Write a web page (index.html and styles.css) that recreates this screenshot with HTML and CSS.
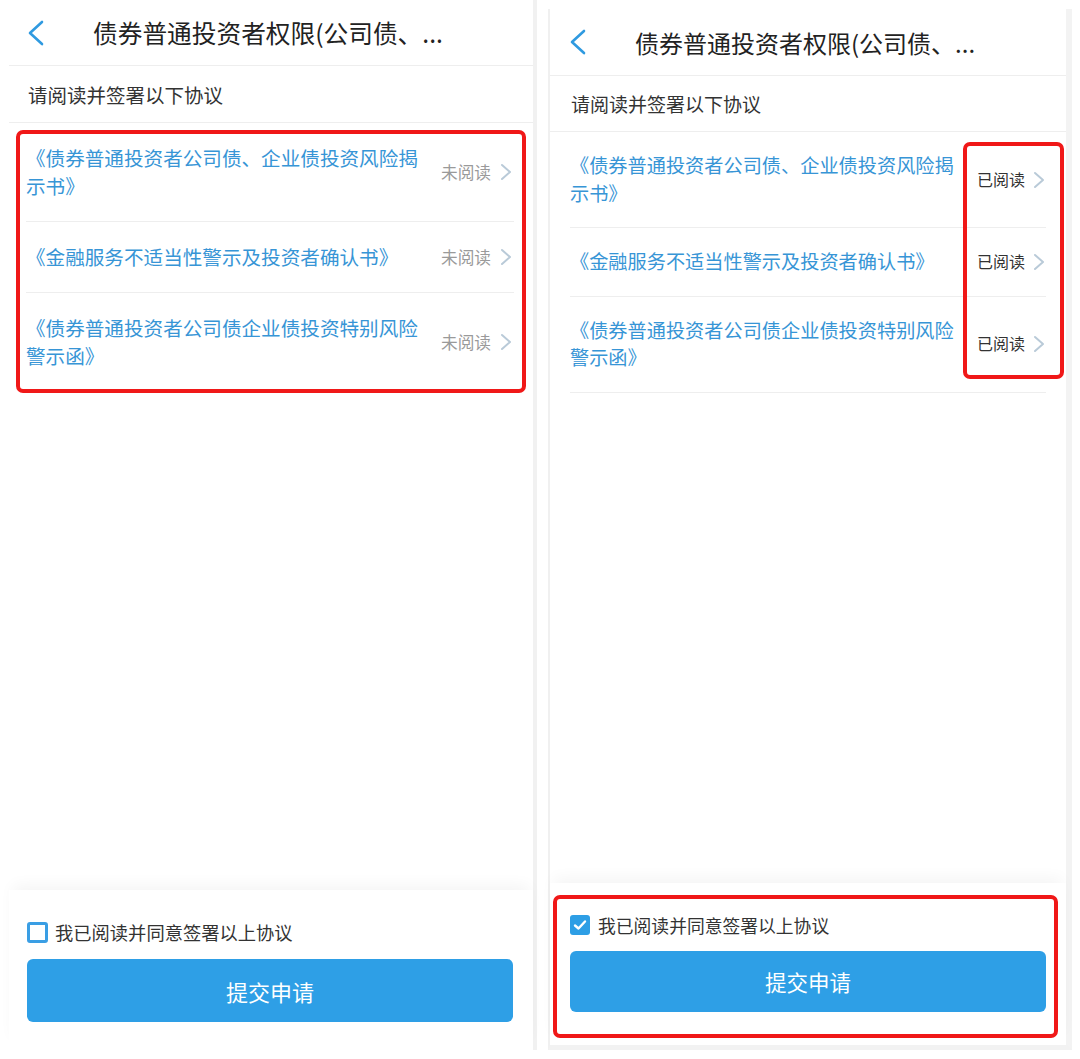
FILE: index.html
```html
<!DOCTYPE html>
<html lang="zh-CN">
<head>
<meta charset="utf-8">
<link rel="stylesheet" href="styles.css">
</head>
<body>
<div class="screens">
  <section class="phone phone-left">
    <header class="nav">
      <svg class="back" width="16" height="26" viewBox="0 0 16 26"><polyline points="14,2 2,13 14,24" fill="none" stroke="#2f9ae0" stroke-width="2.6" stroke-linecap="round" stroke-linejoin="round"/></svg>
      <h1 class="title">债券普通投资者权限(公司债、...</h1>
    </header>
    <div class="sub">请阅读并签署以下协议</div>
    <main class="content">
      <ul class="docs boxed">
        <li class="doc two">
          <span class="doc-name">《债券普通投资者公司债、企业债投资风险揭示书》</span>
          <span class="status unread">未阅读</span>
          <svg class="arrow" width="12" height="18" viewBox="0 0 12 18"><polyline points="2,2 10,9 2,16" fill="none" stroke="#b9cad8" stroke-width="2" stroke-linecap="round" stroke-linejoin="round"/></svg>
        </li>
        <li class="doc">
          <span class="doc-name">《金融服务不适当性警示及投资者确认书》</span>
          <span class="status unread">未阅读</span>
          <svg class="arrow" width="12" height="18" viewBox="0 0 12 18"><polyline points="2,2 10,9 2,16" fill="none" stroke="#b9cad8" stroke-width="2" stroke-linecap="round" stroke-linejoin="round"/></svg>
        </li>
        <li class="doc two">
          <span class="doc-name">《债券普通投资者公司债企业债投资特别风险警示函》</span>
          <span class="status unread">未阅读</span>
          <svg class="arrow" width="12" height="18" viewBox="0 0 12 18"><polyline points="2,2 10,9 2,16" fill="none" stroke="#b9cad8" stroke-width="2" stroke-linecap="round" stroke-linejoin="round"/></svg>
        </li>
      </ul>
    </main>
    <footer class="bottom">
      <label class="agree">
        <span class="check empty"></span>
        <span>我已阅读并同意签署以上协议</span>
      </label>
      <button class="submit">提交申请</button>
    </footer>
  </section>

  <section class="phone phone-right">
    <header class="nav">
      <svg class="back" width="16" height="26" viewBox="0 0 16 26"><polyline points="14,2 2,13 14,24" fill="none" stroke="#2f9ae0" stroke-width="2.6" stroke-linecap="round" stroke-linejoin="round"/></svg>
      <h1 class="title">债券普通投资者权限(公司债、...</h1>
    </header>
    <div class="sub">请阅读并签署以下协议</div>
    <main class="content">
      <ul class="docs status-boxed">
        <li class="doc two">
          <span class="doc-name">《债券普通投资者公司债、企业债投资风险揭示书》</span>
          <span class="status read">已阅读</span>
          <svg class="arrow" width="12" height="18" viewBox="0 0 12 18"><polyline points="2,2 10,9 2,16" fill="none" stroke="#b9cad8" stroke-width="2" stroke-linecap="round" stroke-linejoin="round"/></svg>
        </li>
        <li class="doc">
          <span class="doc-name">《金融服务不适当性警示及投资者确认书》</span>
          <span class="status read">已阅读</span>
          <svg class="arrow" width="12" height="18" viewBox="0 0 12 18"><polyline points="2,2 10,9 2,16" fill="none" stroke="#b9cad8" stroke-width="2" stroke-linecap="round" stroke-linejoin="round"/></svg>
        </li>
        <li class="doc two">
          <span class="doc-name">《债券普通投资者公司债企业债投资特别风险警示函》</span>
          <span class="status read">已阅读</span>
          <svg class="arrow" width="12" height="18" viewBox="0 0 12 18"><polyline points="2,2 10,9 2,16" fill="none" stroke="#b9cad8" stroke-width="2" stroke-linecap="round" stroke-linejoin="round"/></svg>
        </li>
      </ul>
    </main>
    <footer class="bottom boxed-bottom">
      <label class="agree">
        <span class="check checked"><svg width="20" height="20" viewBox="0 0 20 20"><polyline points="5,10.5 8.5,13.5 15,6.5" fill="none" stroke="#fff" stroke-width="2.4" stroke-linecap="round" stroke-linejoin="round"/></svg></span>
        <span>我已阅读并同意签署以上协议</span>
      </label>
      <button class="submit">提交申请</button>
    </footer>
  </section>
</div>
</body>
</html>
```

FILE: styles.css
```css
* { box-sizing: border-box; }
html, body { margin: 0; padding: 0; background: #fff; }
body {
  width: 1080px;
  height: 1059px;
  overflow: hidden;
  font-family: "Noto Sans CJK SC", "Noto Sans", sans-serif;
  color: #333;
}
ul { list-style: none; margin: 0; padding: 0; }
h1 { margin: 0; font-weight: normal; }
button { font-family: inherit; border: 0; cursor: pointer; }

.screens {
  display: flex;
  align-items: flex-start;
  padding-left: 9px;
  gap: 11px;
}

.phone {
  display: flex;
  flex-direction: column;
  background: #fff;
}
.phone-left {
  width: 528px;
  height: 1050px;
  border-right: 4px solid #f1f1f1;
}
.phone-right {
  width: 524px;
  height: 1041px;
  margin-top: 9px;
  border-left: 2px solid #f0f0f0;
  border-right: 6px solid #f3f3f3;
  border-bottom: 5px solid #f2f2f2;
}

/* nav */
.nav {
  display: flex;
  align-items: center;
  border-bottom: 1px solid #eeeeee;
  flex: none;
}
.phone-left .nav { height: 66px; padding-left: 19px; }
.phone-right .nav { height: 67px; padding-left: 20px; }
.back { flex: none; }
.title {
  color: #222;
  white-space: nowrap;
}
.phone-left .title { font-size: 24.7px; margin-left: 49px; margin-top: -1px; }
.phone-right .title { font-size: 24px; margin-left: 49px; }

/* sub header */
.sub {
  flex: none;
  border-bottom: 1px solid #eeeeee;
  display: flex;
  align-items: center;
  color: #333;
}
.phone-left .sub { height: 57px; padding-left: 19px; font-size: 19.5px; }
.phone-right .sub { height: 56px; padding-left: 21px; font-size: 19px; }

.content { flex: 1; }

/* doc list */
.docs { position: relative; }
.phone-left .docs { margin: 0 19px 0 17px; }
.phone-right .docs { margin: 0 20px 0 20px; }

.doc {
  display: flex;
  align-items: center;
  border-bottom: 1px solid #eeeeee;
  line-height: 28px;
}
.phone-left .doc { padding: 21px 2px 21px 0; }
.phone-right .doc { padding: 20px 1px 20px 0; line-height: 27.5px; }

.doc-name {
  flex: 1;
  color: #3795d6;
}
.phone-left .doc-name { font-size: 19.6px; padding-right: 10px; }
.phone-right .doc-name { font-size: 19.2px; padding-right: 14px; }

.status { flex: none; }
.phone-left .status { font-size: 16.7px; width: 59px; }
.phone-right .status { font-size: 16px; width: 56px; }
.status.unread { color: #9a9a9a; }
.status.read { color: #333; }
.arrow { flex: none; }

/* annotation boxes (overlay) */
.boxed::after {
  content: "";
  position: absolute;
  left: -10px;
  right: -12px;
  top: 7px;
  bottom: -1px;
  border: 4px solid #f01818;
  border-radius: 7px;
  pointer-events: none;
}
.status-boxed::after {
  content: "";
  position: absolute;
  left: 393px;
  width: 93px;
  top: 10px;
  height: 229px;
  border: 4px solid #f01818;
  border-radius: 7px;
  pointer-events: none;
}

/* bottom */
.bottom {
  flex: none;
  position: relative;
  background: #fff;
  box-shadow: 0 -9px 14px -4px rgba(0, 0, 0, 0.045);
  display: flex;
  flex-direction: column;
}
.phone-left .bottom { height: 160px; padding: 31px 20px 0 18px; }
.phone-right .bottom { height: 162px; padding: 31px 20px 0 20px; }

.agree {
  display: flex;
  align-items: center;
  color: #333;
  line-height: 22px;
}
.phone-left .agree { font-size: 18.3px; gap: 7px; }
.phone-right .agree { font-size: 17.8px; gap: 8px; }

.check {
  flex: none;
  display: inline-flex;
  align-items: center;
  justify-content: center;
  border-radius: 3px;
}
.check.empty {
  width: 21px;
  height: 21px;
  border: 3px solid #3a9ee4;
}
.check.checked {
  width: 20px;
  height: 20px;
  background: #2d9ee5;
}

.submit {
  width: 100%;
  background: #2e9fe6;
  color: #fff;
  border-radius: 6px;
}
.phone-left .submit { height: 63px; margin-top: 16px; font-size: 22px; }
.phone-right .submit { height: 61px; margin-top: 15px; font-size: 21.5px; }

.boxed-bottom::after {
  content: "";
  position: absolute;
  left: 3px;
  right: 8px;
  top: 12px;
  height: 135px;
  border: 4px solid #f01818;
  border-radius: 7px;
  pointer-events: none;
}
```
